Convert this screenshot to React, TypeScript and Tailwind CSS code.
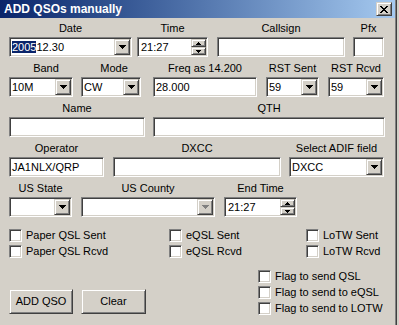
import React from 'react';

// classic 3D bevels
const sunken =
  'border border-t-[#808080] border-l-[#808080] border-b-white border-r-white shadow-[inset_1px_1px_0_#404040,inset_-1px_-1px_0_#d4d0c8] bg-white';
const raised =
  'border border-t-[#d4d0c8] border-l-[#d4d0c8] border-b-[#404040] border-r-[#404040] shadow-[inset_1px_1px_0_#ffffff,inset_-1px_-1px_0_#808080] bg-[#d4d0c8]';

function DownArrow({ color = '#000' }: { color?: string }) {
  return (
    <svg width="7" height="4" shapeRendering="crispEdges" fill={color}>
      <rect x="0" y="0" width="7" height="1" />
      <rect x="1" y="1" width="5" height="1" />
      <rect x="2" y="2" width="3" height="1" />
      <rect x="3" y="3" width="1" height="1" />
    </svg>
  );
}

function SmallArrow({ up }: { up?: boolean }) {
  return (
    <svg width="5" height="3" shapeRendering="crispEdges" fill="#000" className={up ? '' : 'rotate-180'}>
      <rect x="2" y="0" width="1" height="1" />
      <rect x="1" y="1" width="3" height="1" />
      <rect x="0" y="2" width="5" height="1" />
    </svg>
  );
}

function CloseGlyph() {
  const rows = [
    [0, 2, 6, 2],
    [1, 2, 5, 2],
    [2, 4],
    [3, 2],
    [2, 4],
    [1, 2, 5, 2],
    [0, 2, 6, 2],
  ];
  return (
    <svg width="8" height="7" shapeRendering="crispEdges" fill="#000">
      {rows.map((r, y) => (
        <React.Fragment key={y}>
          <rect x={r[0]} y={y} width={r[1]} height="1" />
          {r.length > 2 && <rect x={r[2]} y={y} width={r[3]} height="1" />}
        </React.Fragment>
      ))}
    </svg>
  );
}

function Group({ label, w, className = '', labelClass = '', children }: { label: string; w: number; className?: string; labelClass?: string; children: React.ReactNode }) {
  return (
    <div className={`flex flex-col items-center ${className}`} style={{ width: w }}>
      <div className={`h-[16px] leading-[14px] whitespace-nowrap ${labelClass}`}>{label}</div>
      {children}
    </div>
  );
}

function TextField({ value = '' }: { value?: string }) {
  return (
    <div className={`${sunken} w-full h-[20px] flex items-center pl-[2px] leading-[13px] whitespace-nowrap overflow-hidden`}>
      {value}
    </div>
  );
}

function Combo({ value = '', disabled, children }: { value?: string; disabled?: boolean; children?: React.ReactNode }) {
  return (
    <div className={`${sunken} w-full h-[20px] flex`}>
      <div className="flex-1 flex items-center pl-[2px] leading-[13px] whitespace-nowrap overflow-hidden">
        {children ?? value}
      </div>
      <div className={`${raised} w-[16px] my-[1px] mr-[1px] flex items-center justify-center`}>
        <DownArrow color={disabled ? '#808080' : '#000'} />
      </div>
    </div>
  );
}

function Spin({ value }: { value: string }) {
  return (
    <div className={`${sunken} w-full h-[20px] flex`}>
      <div className="flex-1 flex items-center pl-[3px] leading-[13px]">{value}</div>
      <div className="flex flex-col my-[1px] mr-[1px] w-[15px]">
        <div className={`${raised} h-[8px] flex items-center justify-center`}>
          <SmallArrow up />
        </div>
        <div className={`${raised} h-[8px] flex items-center justify-center`}>
          <SmallArrow />
        </div>
      </div>
    </div>
  );
}

function Check({ label, w }: { label: string; w?: number }) {
  return (
    <div className="h-[16px] flex items-start gap-[4px] whitespace-nowrap" style={w ? { width: w } : undefined}>
      <div className={`${sunken} w-[13px] h-[13px] shrink-0`} />
      <span className="leading-[13px]">{label}</span>
    </div>
  );
}

export default function App() {
  return (
    <div className="w-[399px] h-[325px] flex bg-[#d4d0c8] text-black text-[11px] font-['Liberation_Sans',Arial,sans-serif] overflow-hidden">
      <div className="w-[395px] flex flex-col">
        {/* title bar */}
        <div className="h-[18px] flex items-center justify-between pl-[4px] pr-[3px] bg-linear-to-r from-[#0a246a] to-[#a6caf0]">
          <span className="text-white font-bold text-[12px] leading-[18px]">ADD QSOs manually</span>
          <div className={`${raised} w-[16px] h-[14px] flex items-center justify-center`}>
            <CloseGlyph />
          </div>
        </div>

        <div className="pl-[9px] flex flex-col">
          <div className="mt-[3px] flex">
            <Group label="Date" w={123}>
              <Combo>
                <span className="bg-[#0a246a] text-white leading-[12px]">2005</span>
                <span>12.30</span>
              </Combo>
            </Group>
            <Group label="Time" w={71} className="ml-[5px]">
              <Spin value="21:27" />
            </Group>
            <Group label="Callsign" w={128} className="ml-[9px]">
              <TextField />
            </Group>
            <Group label="Pfx" w={31} className="ml-[8px]">
              <TextField />
            </Group>
          </div>

          <div className="mt-[4px] flex">
            <Group label="Band" w={64} labelClass="pl-[10px]">
              <Combo value="10M" />
            </Group>
            <Group label="Mode" w={60} className="ml-[8px]" labelClass="pl-[6px]">
              <Combo value="CW" />
            </Group>
            <Group label="Freq as 14.200" w={104} className="ml-[12px]">
              <TextField value="28.000" />
            </Group>
            <Group label="RST Sent" w={53} className="ml-[9px]">
              <Combo value="59" />
            </Group>
            <Group label="RST Rcvd" w={56} className="ml-[9px]">
              <Combo value="59" />
            </Group>
          </div>

          <div className="mt-[4px] flex">
            <Group label="Name" w={136}>
              <TextField />
            </Group>
            <Group label="QTH" w={232} className="ml-[8px]">
              <TextField />
            </Group>
          </div>

          <div className="mt-[4px] flex">
            <Group label="Operator" w={95}>
              <TextField value="JA1NLX/QRP" />
            </Group>
            <Group label="DXCC" w={168} className="ml-[9px]">
              <TextField />
            </Group>
            <Group label="Select ADIF field" w={95} className="ml-[8px]">
              <Combo value="DXCC" />
            </Group>
          </div>

          <div className="mt-[4px] flex">
            <Group label="US State" w={63}>
              <Combo />
            </Group>
            <Group label="US County" w={134} className="ml-[9px]">
              <Combo disabled />
            </Group>
            <Group label="End Time" w={73} className="ml-[9px]">
              <Spin value="21:27" />
            </Group>
          </div>

          {/* QSL flags */}
          <div className="mt-[12px] flex">
            <Check label="Paper QSL Sent" w={160} />
            <Check label="eQSL Sent" w={137} />
            <Check label="LoTW Sent" />
          </div>
          <div className="flex">
            <Check label="Paper QSL Rcvd" w={160} />
            <Check label="eQSL Rcvd" w={137} />
            <Check label="LoTW Rcvd" />
          </div>

          <div className="mt-[9px] flex items-start">
            <button className={`${raised} mt-[19px] w-[64px] h-[25px] flex items-center justify-center leading-[13px]`}>ADD QSO</button>
            <button className={`${raised} mt-[19px] ml-[8px] w-[65px] h-[25px] flex items-center justify-center leading-[13px]`}>Clear</button>
            <div className="ml-[112px] flex flex-col">
              <Check label="Flag to send QSL" />
              <Check label="Flag to send to eQSL" />
              <Check label="Flag to send to LOTW" />
            </div>
          </div>
        </div>
      </div>
      <div className="w-[1px] bg-[#808080]" />
      <div className="w-[1px] bg-[#404040]" />
    </div>
  );
}
